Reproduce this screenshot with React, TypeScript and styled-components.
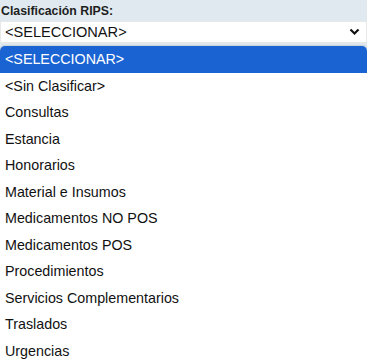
import React from 'react';
import styled, { createGlobalStyle } from 'styled-components';

const options = [
  '<SELECCIONAR>',
  '<Sin Clasificar>',
  'Consultas',
  'Estancia',
  'Honorarios',
  'Material e Insumos',
  'Medicamentos NO POS',
  'Medicamentos POS',
  'Procedimientos',
  'Servicios Complementarios',
  'Traslados',
  'Urgencias',
];

const GlobalStyle = createGlobalStyle`
  html, body {
    margin: 0;
    padding: 0;
    background: #dfe9ef;
    font-family: "Liberation Sans", Arial, sans-serif;
  }
`;

const Page = styled.div`
  width: 367px;
  height: 363px;
  overflow: hidden;
  display: flex;
  flex-direction: column;
`;

const Field = styled.div`
  display: flex;
  flex-direction: column;
  padding: 4px 0 0 0;
`;

const Label = styled.label`
  font-size: 12.3px;
  font-weight: bold;
  color: #1e1e1e;
  line-height: 15px;
  height: 17px;
  padding-left: 1px;
`;

const SelectBox = styled.div`
  display: flex;
  align-items: center;
  justify-content: space-between;
  height: 20px;
  background: #fff;
  border: 1px solid #e8e8e8;
  border-radius: 2px;
  padding: 0 6px 0 4px;
  font-size: 14.6px;
  color: #111;
`;

const Chevron = styled.svg`
  width: 11px;
  height: 8px;
`;

const List = styled.ul`
  list-style: none;
  margin: 3px 0 0 0;
  padding: 0;
  flex: 1;
  background: #fff;
  border-radius: 5px 5px 0 0;
  box-shadow: 0 0 2px rgba(0, 0, 0, 0.35);
  overflow: hidden;
`;

const Item = styled.li<{ $active?: boolean }>`
  height: 26.5px;
  display: flex;
  align-items: center;
  padding-left: 5px;
  font-size: 14.3px;
  color: ${(p) => (p.$active ? '#fff' : '#111')};
  background: ${(p) => (p.$active ? '#1a63d3' : 'transparent')};
`;

export default function App() {
  return (
    <Page>
      <GlobalStyle />
      <Field>
        <Label>Clasificación RIPS:</Label>
        <SelectBox>
          <span>{options[0]}</span>
          <Chevron viewBox="0 0 11 8">
            <path d="M1.5 1.5 L5.5 5.5 L9.5 1.5" fill="none" stroke="#111" strokeWidth="2.2" />
          </Chevron>
        </SelectBox>
      </Field>
      <List>
        {options.map((o, i) => (
          <Item key={o} $active={i === 0}>
            {o}
          </Item>
        ))}
      </List>
    </Page>
  );
}
